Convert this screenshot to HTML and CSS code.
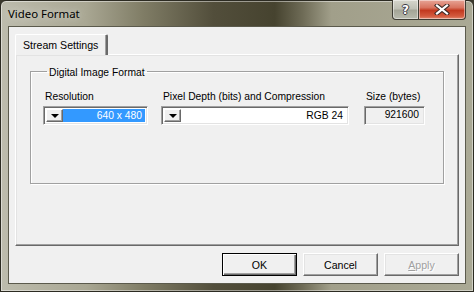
FILE: index.html
```html
<!DOCTYPE html>
<html lang="en">
<head>
    <meta charset="UTF-8">
    <title>Video Format</title>
    <link rel="stylesheet" href="styles.css">
</head>
<body>
    <div class="window">
        <div class="titlebar">
            <span class="title">Video Format</span>
            <div class="caption-buttons">
                <div class="cap help">?</div>
                <div class="cap close">
                    <svg width="16" height="11" viewBox="0 0 16 11">
                        <path d="M3 1.5 L13 9.5 M13 1.5 L3 9.5" stroke="#3c2a26" stroke-width="4.2" stroke-linecap="square"/>
                        <path d="M3 1.5 L13 9.5 M13 1.5 L3 9.5" stroke="#fff" stroke-width="2.2" stroke-linecap="square"/>
                    </svg>
                </div>
            </div>
        </div>

        <div class="client">
            <div class="tabs">
                <div class="tab">Stream Settings</div>
            </div>

            <div class="panel">
                <fieldset class="group">
                    <legend>Digital Image Format</legend>
                    <div class="fields">
                        <div class="field res">
                            <label>Resolution</label>
                            <div class="combo">
                                <span class="drop"><i class="arrow"></i></span>
                                <span class="value selected">640 x 480</span>
                            </div>
                        </div>
                        <div class="field depth">
                            <label>Pixel Depth (bits) and Compression</label>
                            <div class="combo">
                                <span class="drop"><i class="arrow"></i></span>
                                <span class="value">RGB 24</span>
                            </div>
                        </div>
                        <div class="field size">
                            <label>Size (bytes)</label>
                            <div class="readonly">921600</div>
                        </div>
                    </div>
                </fieldset>
            </div>

            <div class="buttons">
                <button class="default">OK</button>
                <button>Cancel</button>
                <button class="disabled"><u>A</u>pply</button>
            </div>
        </div>
    </div>
</body>
</html>
```

FILE: styles.css
```css
body {
    margin: 0;
    padding: 0;
    background-color: #3a382c;
    font-family: 'Liberation Sans', Arial, sans-serif;
    font-size: 10.3px;
    color: #000;
}

.window {
    width: 474px;
    height: 292px;
    box-sizing: border-box;
    display: flex;
    flex-direction: column;
    border: 1px solid #2c2b22;
    border-radius: 6px 6px 0 0;
    background: linear-gradient(90deg, #bdbcad 0%, #a9a793 18%, #807d66 30%, #524e3b 45%, #46432f 58%, #6f6c57 64%, #a19f8a 70%, #aaa995 100%);
    box-shadow: inset 0 0 0 1px rgba(255, 255, 255, 0.45);
}

.titlebar {
    height: 28px;
    display: flex;
    justify-content: space-between;
    align-items: flex-start;
    padding-left: 7px;
    padding-right: 7px;
}

.title {
    font-family: 'Noto Sans', sans-serif;
    font-size: 11.4px;
    color: #000;
    margin-top: 5px;
    text-shadow: 0 0 8px rgba(255, 255, 255, 0.7);
}

.caption-buttons {
    display: flex;
    margin-top: -1px;
}

.cap {
    height: 20px;
    box-sizing: border-box;
    border: 1px solid #3e3c33;
    border-top: none;
    display: flex;
    align-items: center;
    justify-content: center;
    box-shadow: inset 0 0 0 1px rgba(255, 255, 255, 0.45);
}

.help {
    width: 27px;
    border-radius: 0 0 0 4px;
    background: linear-gradient(#d6d6cc 0%, #bfc0b5 45%, #a4a597 55%, #b9bbae 100%);
    color: #fff;
    font-family: 'DejaVu Sans', sans-serif;
    font-weight: bold;
    font-size: 12px;
    text-shadow: 1px 0 0 #3a3a44, -1px 0 0 #3a3a44, 0 1px 0 #3a3a44, 0 -1px 0 #3a3a44;
}

.close {
    width: 47px;
    border-left: none;
    border-radius: 0 0 4px 0;
    background: linear-gradient(#e7a597 0%, #d8735f 40%, #c2391f 55%, #d35a3e 85%, #e08a70 100%);
}

.client {
    flex: 1;
    margin: 0 7px 7px 7px;
    border: 1px solid #5b5a4c;
    background-color: #f0f0f0;
    padding: 7px 6px 7px 6px;
    display: flex;
    flex-direction: column;
}

.tabs {
    display: flex;
    height: 20px;
    position: relative;
    z-index: 1;
}

.tab {
    height: 21px;
    box-sizing: border-box;
    padding: 4px 8px 0 7px;
    border-top: 1px solid #fff;
    border-left: 1px solid #fff;
    border-right: 2px solid #696969;
    box-shadow: inset -1px 0 0 #a0a0a0;
    border-radius: 2px 2px 0 0;
    background-color: #f0f0f0;
    font-size: 10.6px;
}

.panel {
    height: 192px;
    box-sizing: border-box;
    border-top: 1px solid #fff;
    border-left: 1px solid #fff;
    border-right: 1px solid #696969;
    border-bottom: 1px solid #696969;
    box-shadow: inset -1px -1px 0 #a0a0a0, inset 1px 1px 0 #e3e3e3;
    padding: 11px 14px 0 14px;
}

.group {
    margin: 0;
    height: 118px;
    box-sizing: border-box;
    border: 1px solid #a0a0a0;
    box-shadow: inset 1px 1px 0 #fff, 1px 1px 0 #fff;
    padding: 14px 11px 0 11px;
}

.group legend {
    padding: 0 2px;
    margin-left: 5px;
    position: relative;
    top: 1px;
}

.fields {
    display: flex;
    gap: 14px;
}

.field {
    display: flex;
    flex-direction: column;
}

.field label {
    padding-left: 2px;
    height: 13px;
    margin-bottom: 2px;
}

.res { width: 105px; margin-left: 1px; }
.depth { width: 188px; margin-left: -1px; }
.size { width: 61px; margin-left: 1px; }

.combo, .readonly {
    height: 19px;
    box-sizing: border-box;
    border-top: 1px solid #a0a0a0;
    border-left: 1px solid #a0a0a0;
    border-right: 1px solid #fff;
    border-bottom: 1px solid #fff;
    box-shadow: inset 1px 1px 0 #696969, inset -1px -1px 0 #e3e3e3;
}

.combo {
    display: flex;
    background-color: #fff;
    padding: 2px 2px 2px 2px;
}

.drop {
    width: 17px;
    box-sizing: border-box;
    border-top: 1px solid #fff;
    border-left: 1px solid #fff;
    border-right: 1px solid #696969;
    border-bottom: 1px solid #696969;
    box-shadow: inset -1px -1px 0 #a0a0a0;
    background-color: #f0f0f0;
    display: flex;
    align-items: center;
    justify-content: center;
}

.arrow {
    width: 0;
    height: 0;
    border-left: 4px solid transparent;
    border-right: 4px solid transparent;
    border-top: 4px solid #000;
    margin-top: 1px;
}

.value {
    flex: 1;
    text-align: right;
    padding-right: 3px;
    line-height: 13px;
}

.value.selected {
    background-color: #3399ff;
    color: #fff;
}

.readonly {
    background-color: #f0f0f0;
    text-align: right;
    padding: 2px 5px 0 0;
}

.buttons {
    display: flex;
    justify-content: flex-end;
    gap: 6px;
    margin-top: 7px;
}

button {
    width: 75px;
    height: 23px;
    font-family: 'Liberation Sans', Arial, sans-serif;
    font-size: 10.6px;
    background-color: #f0f0f0;
    border-top: 1px solid #fff;
    border-left: 1px solid #fff;
    border-right: 1px solid #696969;
    border-bottom: 1px solid #696969;
    box-shadow: inset -1px -1px 0 #a0a0a0, inset 1px 1px 0 #e3e3e3;
    padding: 0;
    color: #000;
}

button.default {
    border: 1px solid #000;
    box-shadow: inset 1px 1px 0 #fff, inset -1px -1px 0 #696969, inset -2px -2px 0 #a0a0a0;
}

button.disabled {
    color: #a0a0a0;
    text-shadow: 1px 1px 0 #fff;
}

button u {
    text-decoration: underline;
}
```
